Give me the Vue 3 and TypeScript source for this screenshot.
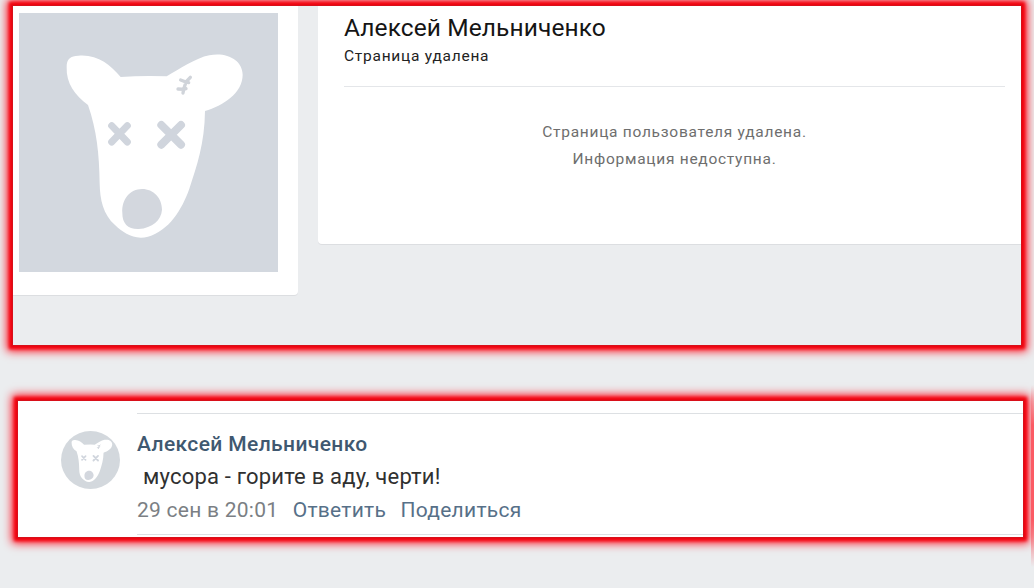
<script setup lang="ts">
interface Profile {
  name: string
  status: string
  notice: string[]
}

interface Comment {
  author: string
  text: string
  date: string
  actions: string[]
}

const profile: Profile = {
  name: 'Алексей Мельниченко',
  status: 'Страница удалена',
  notice: ['Страница пользователя удалена.', 'Информация недоступна.'],
}

const comment: Comment = {
  author: 'Алексей Мельниченко',
  text: 'мусора - горите в аду, черти!',
  date: '29 сен в 20:01',
  actions: ['Ответить', 'Поделиться'],
}
</script>

<template>
  <main class="page">
    <svg class="sprite" aria-hidden="true">
      <symbol id="dog" viewBox="57 39 777 777">
        <path
          class="dog-head"
          d="M362 231 Q430 226 500 229 C540 207 586 174 628 166 C682 156 727 181 728 224 C728 279 669 317 615 333 C614 430 590 500 568 566 C546 628 507 692 444 710 C403 721 370 699 345 675 C309 643 300 598 299 551 C298 462 290 390 264 315 C225 286 198 250 200 202 C199 177 212 167 235 167 C291 162 330 193 362 231Z"
        />
        <path class="dog-eye" d="M335 377 L382 426 M382 377 L335 426" />
        <path class="dog-eye dog-eye--big" d="M484 375 L543 434 M543 375 L484 434" />
        <path class="dog-scar" d="M542 240 L558 246 L571 232 M558 246 L566 248 M558 246 L551 268 M534 267 L551 268 L549 279 M551 268 L558 266" />
        <path
          class="dog-nose"
          d="M367 639 C365 596 390 568 426 567 C461 567 486 594 486 629 C484 660 457 684 416 687 C384 688 367 671 367 639Z"
        />
      </symbol>
    </svg>

    <section class="frame frame--profile">
      <div class="photo-card">
        <svg class="photo"><use href="#dog" /></svg>
      </div>
      <div class="info-card">
        <h1 class="name">{{ profile.name }}</h1>
        <p class="status">{{ profile.status }}</p>
        <div class="notice">
          <p v-for="line in profile.notice" :key="line">{{ line }}</p>
        </div>
      </div>
    </section>

    <section class="frame frame--comment">
      <svg class="avatar" viewBox="12 12 753 753"><use href="#dog" width="777" height="777" /></svg>
      <div class="comment">
        <div class="author">{{ comment.author }}</div>
        <div class="text">{{ comment.text }}</div>
        <div class="meta">
          <span class="date">{{ comment.date }}</span>
          <a v-for="action in comment.actions" :key="action" class="action">{{ action }}</a>
        </div>
      </div>
    </section>
    <div class="edge-glow"></div>
  </main>
</template>

<style>
body {
  margin: 0;
  background: #ebedef;
}
</style>

<style scoped>
.page {
  position: relative;
  box-sizing: border-box;
  width: 1034px;
  height: 588px;
  padding: 6px 0 0 13px;
  overflow: hidden;
  background: #ebedef;
  font-family: Roboto, 'Noto Sans', sans-serif;
}

.sprite {
  position: absolute;
  width: 0;
  height: 0;
}

.frame {
  display: flex;
  align-items: flex-start;
  box-shadow: 0 0 1px 1px #d8101a, 0 0 3px 4px #f0040f, 0 0 9px 6px #ff1020;
}

.frame--profile {
  gap: 20px;
  width: 1008px;
  height: 339px;
  background: #ebedef;
}

.frame--comment {
  box-sizing: border-box;
  gap: 17px;
  width: 1005px;
  height: 136px;
  margin: 56px 0 0 5px;
  padding: 12px 0 2px 43px;
  background: #fff;
}

/* Фото профиля */
.photo-card {
  box-sizing: border-box;
  width: 285px;
  height: 289px;
  padding: 7px 6px;
  background: #fff;
  border-radius: 0 0 4px 0;
  box-shadow: 0 1px 0 #dcdee1;
}

.photo {
  display: block;
  width: 259px;
  height: 259px;
  background: #d3d8df;
}

.dog-head {
  fill: #fff;
}

.dog-eye {
  fill: none;
  stroke: #d0d5dd;
  stroke-width: 21;
  stroke-linecap: round;
}

.dog-eye--big {
  stroke-width: 24;
}

.dog-scar {
  fill: none;
  stroke: #d0d4da;
  stroke-width: 10;
  stroke-linecap: round;
}

.dog-nose {
  fill: #d3d7de;
}

/* Карточка с информацией */
.info-card {
  box-sizing: border-box;
  flex: 1;
  height: 238px;
  padding: 7px 16px 0 26px;
  background: #fff;
  border-radius: 0 0 0 4px;
  box-shadow: 0 1px 0 #dcdee1;
}

.name {
  margin: 0;
  font-size: 24.5px;
  font-weight: 400;
  line-height: 30px;
  letter-spacing: 0.1px;
  color: #151515;
}

.status {
  margin: 0;
  padding: 3px 0 20px;
  border-bottom: 1px solid #e4e6e9;
  font-size: 15.5px;
  line-height: 20px;
  letter-spacing: 0.75px;
  color: #222;
}

.notice {
  padding-top: 32px;
  font-size: 15.5px;
  line-height: 27px;
  letter-spacing: 0.73px;
  text-align: center;
  color: #6e6e6e;
}

.notice p {
  margin: 0;
}

/* Комментарий */
.avatar {
  flex: none;
  width: 59px;
  height: 58px;
  margin-top: 18px;
  border-radius: 50%;
  background: #d3d8dd;
}

.comment {
  box-sizing: border-box;
  flex: 1;
  height: 122px;
  padding-top: 14px;
  border-top: 1px solid #dde0e3;
  border-bottom: 1px solid #dde0e3;
}

.author {
  font-size: 21px;
  font-weight: 500;
  line-height: 32px;
  letter-spacing: 0.38px;
  color: #3f5870;
}

.text {
  padding-left: 6px;
  font-size: 22px;
  line-height: 33px;
  letter-spacing: 0.2px;
  white-space: nowrap;
  color: #303030;
}

.meta {
  display: flex;
  gap: 14.5px;
  font-size: 21px;
  line-height: 34px;
  letter-spacing: 0.25px;
  white-space: nowrap;
  color: #7b7f84;
}

.action {
  color: #577088;
}

/* Свечение у правого края страницы */
.edge-glow {
  position: absolute;
  top: 385px;
  right: 0;
  width: 3px;
  height: 182px;
  background: linear-gradient(transparent, #fb5a64 22%, #fb5a64 74%, transparent);
}
</style>
